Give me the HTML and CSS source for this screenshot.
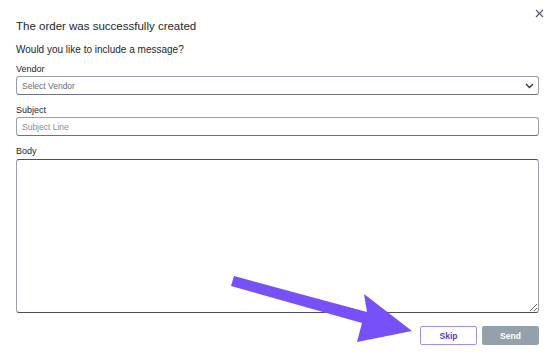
FILE: index.html
```html
<!DOCTYPE html>
<html lang="en">

<head>
    <meta charset="UTF-8">
    <meta name="viewport" content="width=device-width, initial-scale=1.0">
    <title>Order created</title>
    <link rel="stylesheet" href="styles.css">
</head>

<body>
    <div class="modal">
        <button class="btn-close" aria-label="Close">
            <svg width="9" height="9" viewBox="0 0 9 9">
                <path d="M1 1L8 8M8 1L1 8" stroke="#55596a" stroke-width="1.1" fill="none" />
            </svg>
        </button>

        <h1 class="title">The order was successfully created</h1>
        <p class="question">Would you like to include a message?</p>

        <label class="field-label" for="vendor">Vendor</label>
        <div class="select-wrap">
            <select id="vendor" class="field">
                <option>Select Vendor</option>
            </select>
            <svg class="chevron" width="9" height="6" viewBox="0 0 9 6">
                <path d="M1 1L4.5 4.5L8 1" stroke="#333" stroke-width="1.3" fill="none" />
            </svg>
        </div>

        <label class="field-label" for="subject">Subject</label>
        <input id="subject" class="field" type="text" placeholder="Subject Line">

        <label class="field-label" for="body">Body</label>
        <textarea id="body" class="field body-field"></textarea>

        <div class="actions">
            <button class="btn btn-skip">Skip</button>
            <button class="btn btn-send">Send</button>
        </div>

        <!-- callout arrow pointing at Skip -->
        <svg class="callout" width="549" height="360" viewBox="0 0 549 360">
            <path d="M234 276 L367 312 L364 294 L412 331 L357 342 L362 323 L231 286 Z" fill="#7750f8" />
        </svg>
    </div>
</body>

</html>
```

FILE: styles.css
```css
:root {
    --text-color: #24262c;
    --border-color: #9c9fad;
    --border-dark: #4a4e5e;
    --accent: #7750f8;
}

* {
    box-sizing: border-box;
}

body {
    margin: 0;
    background: white;
    font-family: 'Liberation Sans', Arial, sans-serif;
    color: var(--text-color);
}

.modal {
    position: relative;
    display: flex;
    flex-direction: column;
    width: 549px;
    height: 360px;
    padding: 18px 10px 0 16px;
}

.btn-close {
    position: absolute;
    top: 4px;
    right: 3px;
    width: 13px;
    height: 13px;
    padding: 2px;
    border: none;
    background: none;
    cursor: pointer;
}

.title {
    margin: 0;
    font-size: 11.5px;
    font-weight: normal;
    line-height: 16px;
}

.question {
    margin: 8px 0 0;
    font-size: 10px;
    line-height: 16px;
}

.field-label {
    margin-top: 5px;
    font-size: 9px;
    line-height: 12px;
}

.select-wrap {
    position: relative;
    margin-top: 1px;
}

.field {
    display: block;
    width: 100%;
    height: 19px;
    margin: 0;
    padding: 0 5px;
    border: 1px solid var(--border-color);
    border-bottom-color: #6e7282;
    border-radius: 3px;
    background: white;
    font-family: inherit;
    font-size: 8.5px;
    color: #6a6d78;
    outline: none;
}

.field::placeholder {
    color: #8a8d98;
}

select.field {
    appearance: none;
    -webkit-appearance: none;
}

.chevron {
    position: absolute;
    right: 5px;
    top: 7px;
}

.select-wrap + .field-label {
    margin-top: 9px;
}

input.field {
    margin-top: 1px;
}

input.field + .field-label {
    margin-top: 9px;
}

.body-field {
    height: 154px;
    margin-top: 2px;
    border-top-color: var(--border-dark);
    border-bottom-color: var(--border-dark);
    resize: vertical;
}

.actions {
    display: flex;
    justify-content: flex-end;
    gap: 5px;
    margin-top: 13px;
}

.btn {
    width: 57px;
    height: 19px;
    border-radius: 2px;
    font-family: inherit;
    font-size: 8.5px;
    font-weight: bold;
    cursor: pointer;
}

.btn-skip {
    border: 1px solid #a98cf0;
    background: white;
    color: #5a3fbf;
}

.btn-send {
    border: none;
    background: #94a1ab;
    color: white;
}

.callout {
    position: absolute;
    top: 0;
    left: 0;
    pointer-events: none;
}
```
